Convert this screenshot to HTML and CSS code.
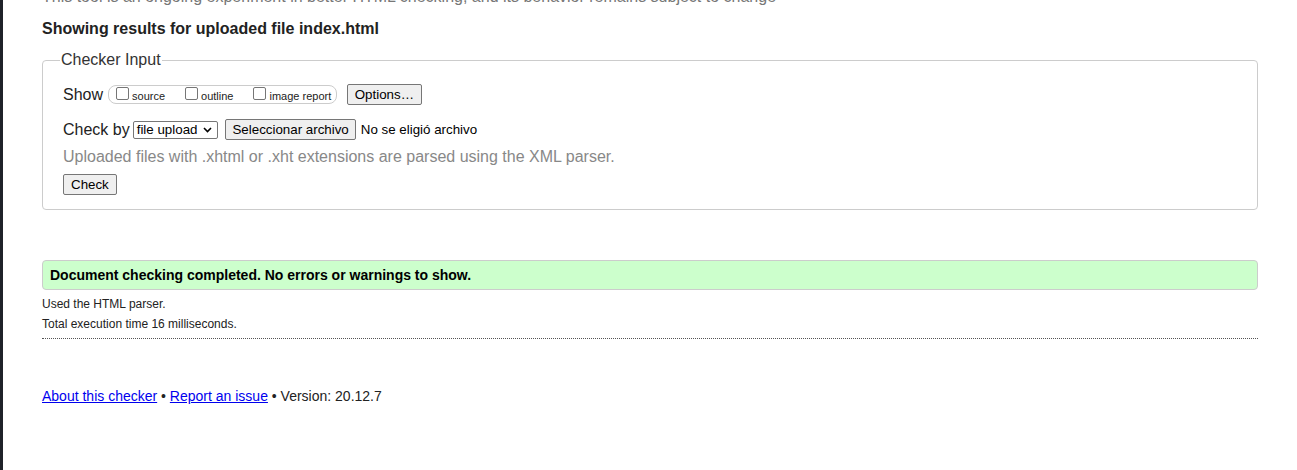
FILE: index.html
```html
<!DOCTYPE html>
<html lang="en">
<head>
<meta charset="utf-8">
<title>Nu Html Checker</title>
<link rel="stylesheet" href="styles.css">
</head>
<body>
<div class="page">
  <p class="intro">This tool is an ongoing experiment in better HTML checking, and its behavior remains subject to change</p>
  <h2 class="heading">Showing results for uploaded file index.html</h2>

  <fieldset class="checker">
    <legend class="legend">Checker Input</legend>
    <div class="row row-show">
      <span class="label">Show</span>
      <span class="show-box">
        <span class="opt"><span class="cb"></span><span class="opt-text">source</span></span>
        <span class="opt"><span class="cb"></span><span class="opt-text">outline</span></span>
        <span class="opt"><span class="cb"></span><span class="opt-text">image report</span></span>
      </span>
      <button class="btn btn-options" type="button">Options…</button>
    </div>
    <div class="row row-checkby">
      <span class="label">Check by</span>
      <span class="select">file upload<svg class="chev" width="9" height="6" viewBox="0 0 9 6"><path d="M1 1 L4.5 4.5 L8 1" fill="none" stroke="#000" stroke-width="1.6"/></svg></span>
      <button class="btn btn-file" type="button">Seleccionar archivo</button>
      <span class="file-none">No se eligió archivo</span>
    </div>
    <p class="hint">Uploaded files with .xhtml or .xht extensions are parsed using the XML parser.</p>
    <div class="row row-submit">
      <button class="btn btn-check" type="button">Check</button>
    </div>
  </fieldset>

  <div class="success">Document checking completed. No errors or warnings to show.</div>
  <p class="meta meta-first">Used the HTML parser.</p>
  <p class="meta meta-last">Total execution time 16 milliseconds.</p>

  <p class="footer"><a href="#">About this checker</a> • <a href="#">Report an issue</a> • Version: 20.12.7</p>
</div>
</body>
</html>
```
FILE: styles.css
```css
html, body {
  margin: 0;
  padding: 0;
  background: #ffffff;
}
body {
  border-left: 3px solid #1f2229;
  min-height: 470px;
  box-sizing: border-box;
  font-family: "Liberation Sans", Arial, sans-serif;
  color: #222222;
  overflow: hidden;
}
.page {
  padding: 0 39px;
  margin-top: -12px;
}
.intro {
  margin: 0;
  font-size: 16px;
  line-height: 18px;
  color: #777777;
}
.heading {
  margin: 14px 0 0 0;
  font-size: 16px;
  line-height: 18px;
  font-weight: bold;
  color: #222222;
}
.checker {
  margin: 13px 0 0 0;
  padding: 15px 20px 14px 20px;
  border: 1px solid #cccccc;
  border-radius: 4px;
}
.legend {
  padding: 0 1px;
  margin-left: -3px;
  font-size: 16px;
  color: #333333;
}
.row {
  display: flex;
  align-items: center;
}
.label {
  font-size: 16px;
  color: #222222;
  margin-right: 5px;
}
.show-box {
  display: inline-flex;
  align-items: center;
  height: 17px;
  border: 1px solid #cccccc;
  border-radius: 8px;
  padding: 0 5px 0 7px;
  margin-right: 10px;
  gap: 20px;
}
.opt {
  display: inline-flex;
  align-items: center;
}
.cb {
  width: 11px;
  height: 11px;
  border: 1px solid #767676;
  border-radius: 2px;
  margin-right: 3px;
  margin-top: -3px;
  background: #fff;
}
.opt-text {
  font-size: 11px;
  color: #222222;
  padding-top: 2px;
}
.btn {
  font-family: "Liberation Sans", Arial, sans-serif;
  font-size: 13.33px;
  line-height: 17px;
  color: #000000;
  background: #efefef;
  border: 1px solid #767676;
  border-radius: 2px;
  padding: 1px 7px;
  margin: 0;
}
.btn-options {
  padding: 1px 6.5px;
}
.btn-file {
  padding: 1px 6px;
}
.row-checkby {
  margin-top: 14px;
}
.select {
  display: inline-flex;
  align-items: center;
  gap: 6px;
  font-size: 13.33px;
  line-height: 16px;
  color: #000;
  border: 1px solid #767676;
  border-radius: 2px;
  padding: 0 5px 0 3px;
  margin-right: 7px;
  margin-left: -2px;
  background: #fff;
}
.chev {
  display: block;
}
.file-none {
  font-size: 13.33px;
  color: #000;
  margin-left: 5px;
}
.hint {
  margin: 8px 0 0 0;
  font-size: 16px;
  line-height: 18px;
  color: #888888;
}
.row-submit {
  margin-top: 8px;
}
.success {
  margin-top: 50px;
  background: #ccffcc;
  border: 1px solid #cccccc;
  border-radius: 4px;
  padding: 6px 7px;
  font-size: 14px;
  line-height: 16px;
  font-weight: bold;
  color: #000;
}
.meta {
  margin: 6px 0 0 0;
  font-size: 12px;
  line-height: 14px;
  color: #222;
}
.meta-first {
  margin-top: 7px;
}
.meta-last {
  padding-bottom: 7px;
  border-bottom: 1px dotted #555555;
}
.footer {
  margin: 49px 0 0 0;
  font-size: 14px;
  line-height: 16px;
  color: #222;
}
.footer a {
  color: #0000ee;
}
```
